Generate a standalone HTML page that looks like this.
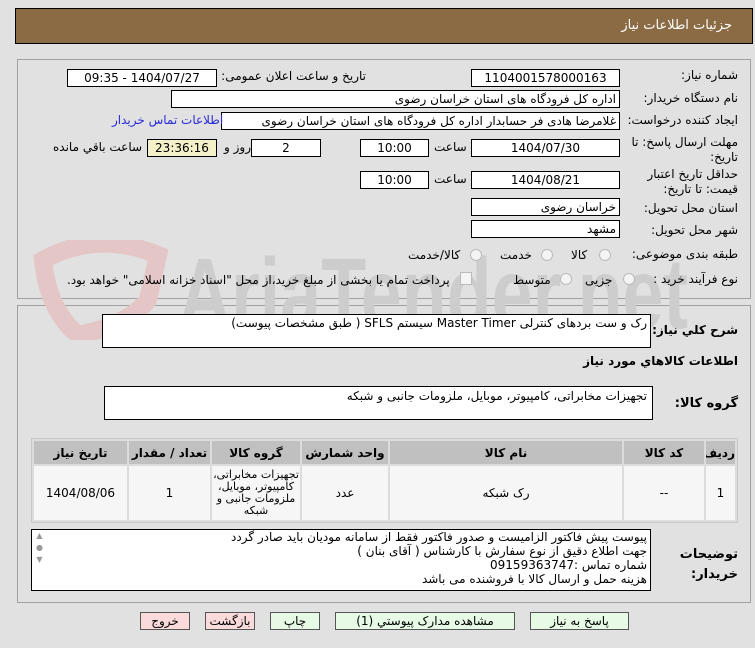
<!DOCTYPE html>
<html><head><meta charset="utf-8"><style>
*{margin:0;padding:0;box-sizing:border-box}
body{width:755px;height:648px;background:#e1e1e1;font-family:Tahoma,"DejaVu Sans","Noto Sans CJK SC",sans-serif;font-size:12px;color:#000;position:relative;overflow:hidden}
.a{position:absolute}
.hdr{left:15px;top:8px;width:738px;height:36px;background:#8b6b43;border:1px solid #000;color:#fff;font-size:13px;text-align:right;padding:9px 20px 0 0;direction:rtl}
.pan{border:1px solid #a0a0a0;background:#e1e1e1}
.box{background:#fff;border:1px solid #000;height:18px;line-height:16px;direction:rtl;padding:0 3px;white-space:nowrap;overflow:hidden}
.c{text-align:center}
.l{direction:rtl;text-align:right;white-space:nowrap}
.rad{width:12px;height:12px;border:1px solid #bbb;border-radius:50%;background:#f4f4f4}
.btn{height:18px;border:1px solid #555;text-align:center;line-height:16px;font-size:12px;direction:rtl}
table{border-collapse:separate;border-spacing:2px;background:#dcdcdc;table-layout:fixed}
th{background:#c0c0c0;font-weight:bold;height:23px;font-size:12px;overflow:hidden;white-space:nowrap}
td{background:#f6f6f6;text-align:center;font-size:12px;height:54px;overflow:hidden}
</style></head><body>
<div class="a hdr">جزئیات اطلاعات نیاز</div>
<div class="a pan" style="left:17px;top:59px;width:734px;height:240px"></div>
<div class="a pan" style="left:17px;top:305px;width:734px;height:298px"></div>
<svg class="a" style="left:18px;top:240px" width="700" height="100">
<path d="M25 20 Q80 -10 140 15 L130 60 Q110 85 60 95 Q30 70 25 20Z" fill="none" stroke="#e4c6c6" stroke-width="18"/>
<text x="160" y="88" font-family="Liberation Sans" font-weight="bold" font-size="100" fill="#cdcdcd" textLength="510" lengthAdjust="spacingAndGlyphs">AriaTender.net</text>
</svg>
<div class="a l" style="right:17px;top:68px">شماره نیاز:</div>
<div class="a box c" style="left:471px;top:69px;width:149px">1104001578000163</div>
<div class="a l" style="right:389px;top:69px">تاریخ و ساعت اعلان عمومی:</div>
<div class="a box c" style="left:67px;top:69px;width:150px">1404/07/27 - 09:35</div>
<div class="a l" style="right:17px;top:91px">نام دستگاه خریدار:</div>
<div class="a box" style="left:171px;top:90px;width:449px">اداره کل فرودگاه های استان خراسان رضوی</div>
<div class="a l" style="right:17px;top:113px">ایجاد کننده درخواست:</div>
<div class="a box" style="left:221px;top:112px;width:399px">غلامرضا هادی فر حسابدار اداره کل فرودگاه های استان خراسان رضوی</div>
<div class="a l" style="left:112px;top:113px;color:#2a2ad8">اطلاعات تماس خریدار</div>
<div class="a l" style="right:17px;top:135px;line-height:15px">مهلت ارسال پاسخ: تا<br>تاریخ:</div>
<div class="a box c" style="left:471px;top:139px;width:149px">1404/07/30</div>
<div class="a l" style="left:434px;top:140px">ساعت</div>
<div class="a box c" style="left:360px;top:139px;width:69px">10:00</div>
<div class="a box c" style="left:251px;top:139px;width:70px">2</div>
<div class="a l" style="left:224px;top:140px">روز و</div>
<div class="a box c" style="left:147px;top:139px;width:70px;background:#f4f0c8">23:36:16</div>
<div class="a l" style="left:53px;top:140px">ساعت باقي مانده</div>
<div class="a l" style="right:17px;top:167px;line-height:15px">حداقل تاریخ اعتبار<br>قیمت: تا تاریخ:</div>
<div class="a box c" style="left:471px;top:171px;width:149px">1404/08/21</div>
<div class="a l" style="left:434px;top:172px">ساعت</div>
<div class="a box c" style="left:360px;top:171px;width:69px">10:00</div>
<div class="a l" style="right:17px;top:201px">استان محل تحویل:</div>
<div class="a box" style="left:471px;top:198px;width:149px">خراسان رضوی</div>
<div class="a l" style="right:17px;top:223px">شهر محل تحویل:</div>
<div class="a box" style="left:471px;top:220px;width:149px">مشهد</div>
<div class="a l" style="right:17px;top:247px">طبقه بندی موضوعی:</div>
<div class="a rad" style="left:599px;top:249px"></div><div class="a l" style="left:571px;top:248px">کالا</div>
<div class="a rad" style="left:541px;top:249px"></div><div class="a l" style="left:500px;top:248px">خدمت</div>
<div class="a rad" style="left:470px;top:249px"></div><div class="a l" style="left:408px;top:248px">کالا/خدمت</div>
<div class="a l" style="right:17px;top:272px">نوع فرآیند خرید :</div>
<div class="a rad" style="left:623px;top:273px"></div><div class="a l" style="left:585px;top:273px">جزیی</div>
<div class="a rad" style="left:560px;top:273px"></div><div class="a l" style="left:513px;top:273px">متوسط</div>
<div class="a" style="left:460px;top:272px;width:12px;height:13px;border:1px solid #bbb;background:#f4f4f4"></div>
<div class="a l" style="left:67px;top:273px">پرداخت تمام یا بخشی از مبلغ خرید،از محل "اسناد خزانه اسلامی" خواهد بود.</div>
<div class="a l" style="right:17px;top:323px;font-weight:bold">شرح کلي نیاز:</div>
<div class="a" style="left:102px;top:314px;width:549px;height:34px;background:#fff;border:1px solid #000;direction:rtl;padding:1px 3px;font-size:12px">رک و ست بردهای کنترلی Master Timer  سیستم SFLS  ( طبق مشخصات پیوست)</div>
<div class="a l" style="right:17px;top:354px;font-weight:bold">اطلاعات کالاهاي مورد نیاز</div>
<div class="a l" style="right:17px;top:396px;font-weight:bold;font-size:13px">گروه کالا:</div>
<div class="a" style="left:104px;top:386px;width:549px;height:34px;background:#fff;border:1px solid #000;direction:rtl;padding:2px 5px">تجهیزات مخابراتی، کامپیوتر، موبایل، ملزومات جانبی و شبکه</div>
<table class="a" style="left:31px;top:438px;width:707px;height:84px;direction:rtl;border:1px solid #c8c8c8">
<colgroup><col style="width:29px"><col style="width:80px"><col style="width:232px"><col style="width:86px"><col style="width:88px"><col style="width:81px"><col style="width:93px"></colgroup>
<tr><th>ردیف</th><th>کد کالا</th><th>نام کالا</th><th>واحد شمارش</th><th>گروه کالا</th><th>تعداد / مقدار</th><th>تاریخ نیاز</th></tr>
<tr><td>1</td><td>--</td><td>رک شبکه</td><td>عدد</td><td style="line-height:12px;font-size:11px">تجهیزات مخابراتی، کامپیوتر، موبایل، ملزومات جانبی و شبکه</td><td>1</td><td>1404/08/06</td></tr>
</table>
<div class="a l" style="right:17px;top:545px;font-weight:bold;font-size:13px;line-height:20px">توضیحات<br>خریدار:</div>
<div class="a" style="left:31px;top:529px;width:620px;height:62px;background:#fff;border:1px solid #000;direction:rtl;padding:0 3px;line-height:14px;font-size:12px">پیوست پیش فاکتور الزامیست و صدور فاکتور فقط از سامانه مودیان باید صادر گردد<br>جهت اطلاع دقیق از نوع سفارش با کارشناس  ( آقای بنان )<br>شماره تماس :09159363747<br>هزینه حمل و ارسال کالا با فروشنده می باشد</div>
<div class="a" style="left:32px;top:530px;width:15px;height:60px;color:#999;font-size:8px;text-align:center;line-height:12px">▲<br>●<br>▼</div>
<div class="a btn" style="left:530px;top:612px;width:99px;background:#e6fae6">پاسخ به نیاز</div>
<div class="a btn" style="left:335px;top:612px;width:180px;background:#e6fae6">مشاهده مدارک پیوستي (1)</div>
<div class="a btn" style="left:270px;top:612px;width:50px;background:#e6fae6">چاپ</div>
<div class="a btn" style="left:205px;top:612px;width:50px;background:#fadada">بازگشت</div>
<div class="a btn" style="left:140px;top:612px;width:50px;background:#fadada">خروج</div>
</body></html>
